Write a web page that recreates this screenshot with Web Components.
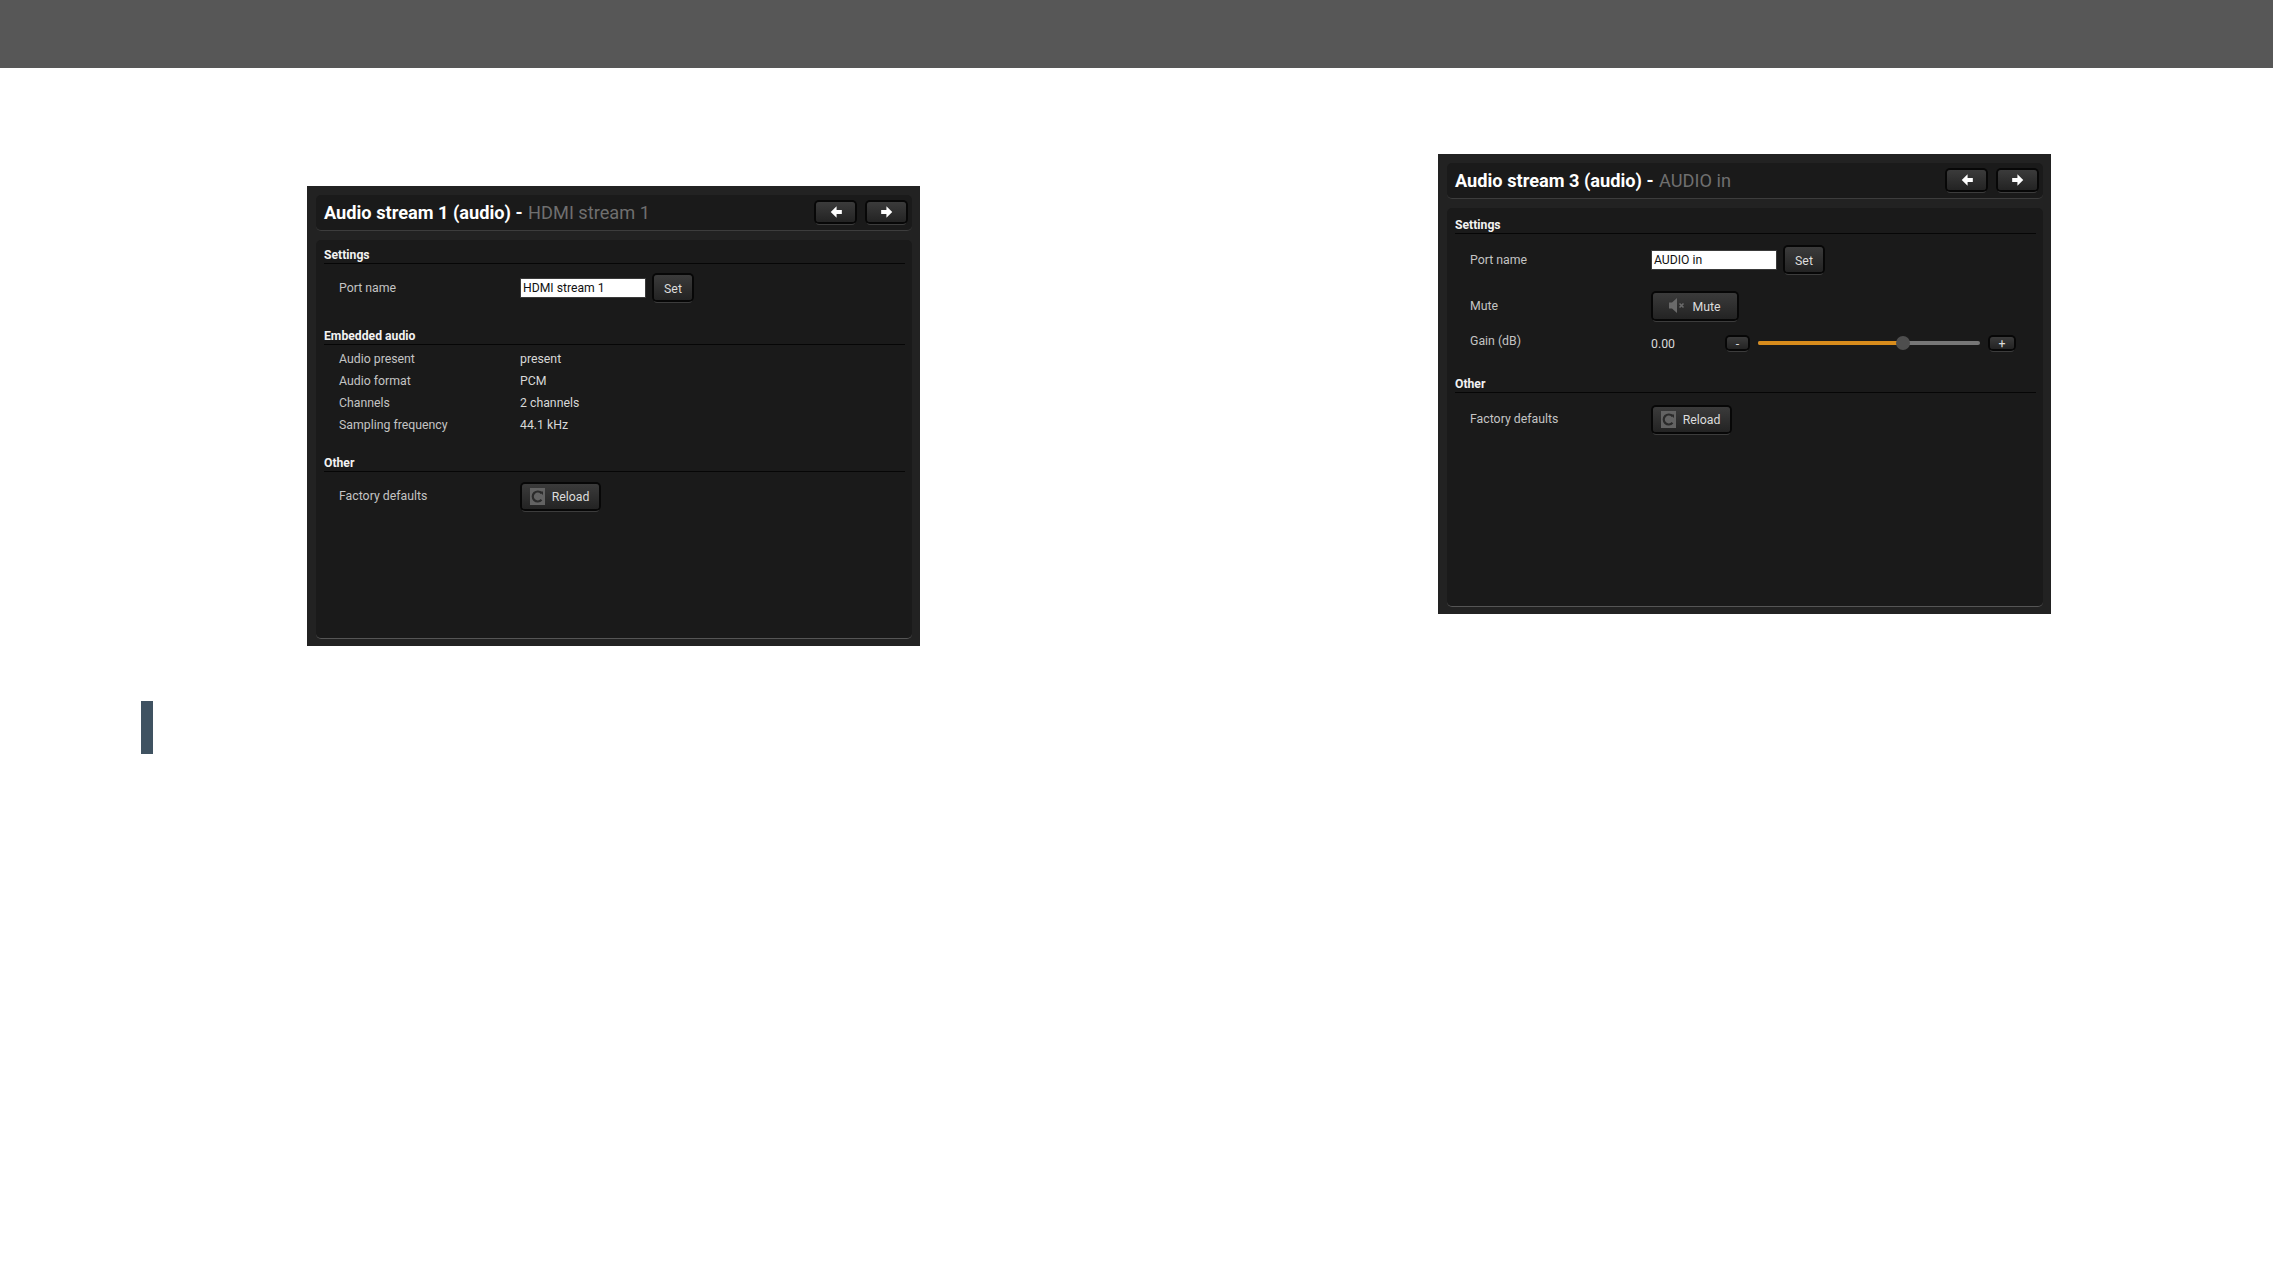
<!DOCTYPE html>
<html>
<head>
<meta charset="utf-8">
<title>Audio streams</title>
<style>
  html, body { margin: 0; background: #fff; }
  body { font-family: Roboto, "Liberation Sans", sans-serif; }
</style>
</head>
<body>
<doc-page>
  <stream-panel slot="left" name="Audio stream 1 (audio)" sub="HDMI stream 1">
    <panel-section heading="Settings">
      <panel-row label="Port name" gap="10" height="27"><name-input value="HDMI stream 1"></name-input><dark-button kind="set">Set</dark-button></panel-row>
    </panel-section>
    <panel-section heading="Embedded audio" gap="27">
      <panel-row label="Audio present" gap="3" height="22">present</panel-row>
      <panel-row label="Audio format" height="22">PCM</panel-row>
      <panel-row label="Channels" height="22">2 channels</panel-row>
      <panel-row label="Sampling frequency" height="22">44.1 kHz</panel-row>
    </panel-section>
    <panel-section heading="Other" gap="19">
      <panel-row label="Factory defaults" gap="10" height="28"><dark-button kind="reload" icon="reload">Reload</dark-button></panel-row>
    </panel-section>
  </stream-panel>
  <stream-panel slot="right" name="Audio stream 3 (audio)" sub="AUDIO in">
    <panel-section heading="Settings" gap="2">
      <panel-row label="Port name" gap="11" height="29"><name-input value="AUDIO in"></name-input><dark-button kind="set">Set</dark-button></panel-row>
      <panel-row label="Mute" gap="17" height="29"><dark-button kind="mute" icon="mute">Mute</dark-button></panel-row>
      <panel-row label="Gain (dB)" gap="15" height="16" lift="4"><gain-slider value="0.00" percent="65.300"></gain-slider></panel-row>
    </panel-section>
    <panel-section heading="Other" gap="25">
      <panel-row label="Factory defaults" gap="11" height="30"><dark-button kind="reload" icon="reload">Reload</dark-button></panel-row>
    </panel-section>
  </stream-panel>
</doc-page>

<script>
const ICONS = {
  left: '<svg width="14" height="14" viewBox="0 0 12 12"><path d="M6.500 1 1.500 6l5 5V7.700H11V4.300H6.500z" fill="#fff"/></svg>',
  right: '<svg width="14" height="14" viewBox="0 0 12 12"><path d="M5.500 1l5 5-5 5V7.700H1V4.300h4.500z" fill="#fff"/></svg>',
  reload: '<svg width="15" height="17" viewBox="0 0 15 17"><rect width="15" height="17" fill="#636363"/><path d="M11.500 5.200A5 5 0 1 0 11.500 11.800" fill="none" stroke="#2b2b2b" stroke-width="2.200"/><path d="M9 3.500h4v3.500z" fill="#2b2b2b"/></svg>',
  mute: '<svg width="16" height="17" viewBox="0 0 16 17"><path d="M0 5.500h3L8 1v15L3 11.500H0z" fill="#6a6a6a"/><path d="m10.500 6.500 4 4m0-4-4 4" stroke="#6a6a6a" stroke-width="1.600"/></svg>'
};

class DocPage extends HTMLElement {
  constructor() {
    super();
    this.attachShadow({mode: 'open'}).innerHTML = `
      <style>
        :host { display: block; min-height: 1276px; background: #fff; }
        .topbar { height: 68px; background: #575757; }
        main { display: flex; padding-left: 141px; }
        .left { padding-top: 118px; }
        .left ::slotted(stream-panel) { margin-left: 166px; }
        .right { padding-top: 86px; margin-left: 518px; }
        .marker { width: 12px; height: 53px; margin-top: 55px; background: #3f5261; }
      </style>
      <div class="topbar"></div>
      <main>
        <div class="left"><slot name="left"></slot><div class="marker"></div></div>
        <div class="right"><slot name="right"></slot></div>
      </main>
    `;
  }
}
customElements.define('doc-page', DocPage);

class StreamPanel extends HTMLElement {
  constructor() {
    super();
    this.attachShadow({mode: 'open'}).innerHTML = `
      <style>
        :host { display: block; width: 613px; height: 460px; box-sizing: border-box; padding: 9px 8px 7px 9px; background: #222; font-family: Roboto, "Liberation Sans", sans-serif; }
        .wrap { display: flex; flex-direction: column; height: 100%; gap: 9px; }
        header { display: flex; align-items: center; height: 36px; box-sizing: border-box; padding: 0 4px 2px 8px; background: #1a1a1a; border-bottom: 1px solid #3d3d3d; border-radius: 5px; }
        h1 { flex: 1; margin: 0; padding-top: 2px; font-size: 18.200px; font-weight: 700; color: #fff; white-space: nowrap; }
        h1 span { margin-left: 1px; font-weight: 400; color: #6f6f6f; }
        .arrows { display: flex; gap: 8px; }
        .body { flex: 1; box-sizing: border-box; padding: 7px 7px 0 8px; background: #1a1a1a; border-bottom: 1px solid #555; border-radius: 5px; }
      </style>
      <div class="wrap">
        <header>
          <h1>${this.getAttribute('name')} - <span>${this.getAttribute('sub')}</span></h1>
          <div class="arrows"><dark-button kind="arrow" icon="left"></dark-button><dark-button kind="arrow" icon="right"></dark-button></div>
        </header>
        <div class="body"><slot></slot></div>
      </div>
    `;
  }
}
customElements.define('stream-panel', StreamPanel);

class PanelSection extends HTMLElement {
  constructor() {
    super();
    this.attachShadow({mode: 'open'}).innerHTML = `
      <style>
        :host { display: block; margin-top: ${this.getAttribute('gap') || 0}px; }
        h2 { height: 16px; margin: 0; font-size: 12.200px; line-height: 16px; font-weight: 700; color: #f2f2f2; border-bottom: 1px solid #060606; }
      </style>
      <h2>${this.getAttribute('heading')}</h2>
      <slot></slot>
    `;
  }
}
customElements.define('panel-section', PanelSection);

class PanelRow extends HTMLElement {
  constructor() {
    super();
    this.attachShadow({mode: 'open'}).innerHTML = `
      <style>
        :host { display: flex; align-items: center; height: ${this.getAttribute('height')}px; margin-top: ${this.getAttribute('gap') || 0}px; font-size: 12.300px; color: #d8d8d8; }
        .label { width: 196px; box-sizing: border-box; padding-left: 15px; padding-bottom: ${this.getAttribute('lift') || 0}px; color: #c4c4c4; }
        .value { display: flex; flex: 1; align-items: center; }
      </style>
      <div class="label">${this.getAttribute('label')}</div>
      <div class="value"><slot></slot></div>
    `;
  }
}
customElements.define('panel-row', PanelRow);

class NameInput extends HTMLElement {
  constructor() {
    super();
    this.attachShadow({mode: 'open'}).innerHTML = `
      <style>
        :host { display: block; width: 126px; height: 20px; margin-right: 6px; box-sizing: border-box; padding: 0 2px; border: 1px solid #3a3a3a; background: #fff; color: #111; font-size: 12.200px; line-height: 18px; }
      </style>
      ${this.getAttribute('value')}
    `;
  }
}
customElements.define('name-input', NameInput);

class DarkButton extends HTMLElement {
  constructor() {
    super();
    const sizes = {set: [38, 25], reload: [77, 25], mute: [84, 26], arrow: [39, 20], small: [21, 12], plus: [24, 12]};
    const kind = this.getAttribute('kind');
    const [w, h] = sizes[kind];
    const icon = ICONS[this.getAttribute('icon')] || '';
    const label = kind === 'arrow' ? '' : '<span class="txt"><slot></slot></span>';
    this.attachShadow({mode: 'open'}).innerHTML = `
      <style>
        :host { display: inline-flex; align-items: center; justify-content: center; gap: 7px; width: ${w}px; height: ${h}px; margin: 2px; box-sizing: border-box; padding-right: ${kind === 'reload' ? 2 : 0}px; border-radius: 3px; background: linear-gradient(#3b3b3b, #232323); box-shadow: 0 0 0 2px #070707, 0 3px 0 0 #3c3c3c; color: #dcdcdc; font-size: 12.300px; }
        svg { display: block; }
        .txt { padding-top: 2px; }
      </style>
      ${icon}${label}
    `;
  }
}
customElements.define('dark-button', DarkButton);

class GainSlider extends HTMLElement {
  constructor() {
    super();
    const pct = this.getAttribute('percent');
    this.attachShadow({mode: 'open'}).innerHTML = `
      <style>
        :host { display: flex; align-items: center; font-size: 12.300px; color: #d8d8d8; }
        .num { width: 74px; padding-top: 2px; }
        .track { position: relative; width: 222px; height: 4px; margin: 0 8px; border-radius: 2px; background: #777; }
        .fill { width: ${pct}%; height: 100%; border-radius: 2px; background: #d88c1c; }
        .thumb { position: absolute; left: ${pct}%; top: -5px; width: 14px; height: 14px; margin-left: -7px; border-radius: 50%; background: #4e4e4e; }
      </style>
      <div class="num">${this.getAttribute('value')}</div>
      <dark-button kind="small">-</dark-button>
      <div class="track"><div class="fill"></div><div class="thumb"></div></div>
      <dark-button kind="plus">+</dark-button>
    `;
  }
}
customElements.define('gain-slider', GainSlider);
</script>
</body>
</html>
